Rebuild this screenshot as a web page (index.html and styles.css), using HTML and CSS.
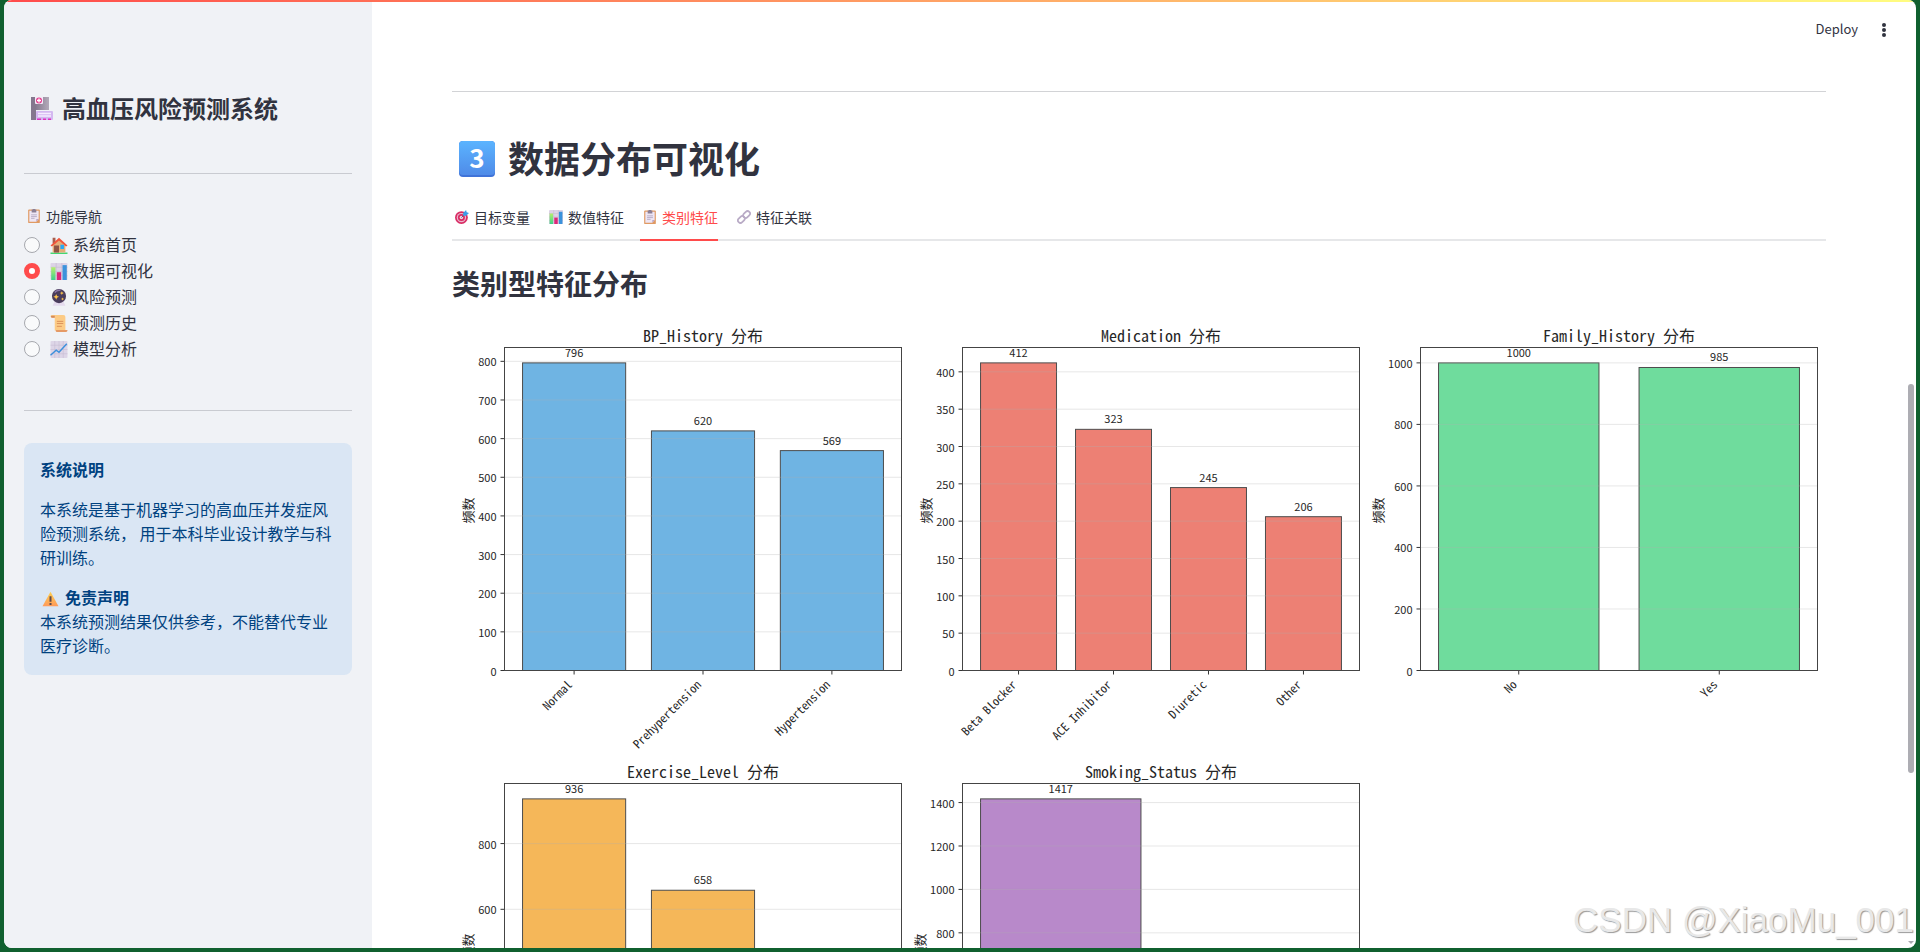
FILE: index.html
```html
<!DOCTYPE html>
<html lang="zh-CN">
<head>
  <meta charset="UTF-8">
  <title>高血压风险预测系统</title>
  <link rel="stylesheet" href="styles.css">
</head>
<body>
  <svg class="sprite" aria-hidden="true">
    <defs>
      <linearGradient id="gray" x2="1" y2="0"><stop offset="0" stop-color="#75687f"/><stop offset="1" stop-color="#b3aab9"/></linearGradient>
      <linearGradient id="sky" x2="0" y2="1"><stop offset="0" stop-color="#5bb4ff"/><stop offset="1" stop-color="#4f8be8"/></linearGradient>
      <linearGradient id="amber" x2="0" y2="1"><stop offset="0" stop-color="#ffd04f"/><stop offset="1" stop-color="#ff9a5a"/></linearGradient>
      <linearGradient id="lime" x2="0" y2="1"><stop offset="0" stop-color="#b4f06c"/><stop offset="1" stop-color="#3fd08c"/></linearGradient>
    </defs>
    <symbol id="hospital" viewBox="0 0 24 24">
      <path d="M1 1h18v13H6v10H1z" fill="url(#gray)"/>
      <path d="M1 1h5v23H1z" fill="#84778e"/>
      <path d="M5 1h8v6a1 1 0 0 1-1 1H6a1 1 0 0 1-1-1z" fill="#f3e9f8"/>
      <circle cx="9" cy="4.500" r="3" fill="#e33d8c"/>
      <path d="M9 2.500v4M7 4.500h4" stroke="#fff" stroke-width="1.300"/>
      <rect x="6" y="15" width="17" height="9" rx="1" fill="#d3b8f0"/>
      <path d="M8 17.500h13M8 20h13" stroke="#f5ecff" stroke-width="1.500"/>
      <path d="M7 23.200h4M13 23.200h3M18 23.200h3" stroke="#e02fc0" stroke-width="1.600"/>
    </symbol>
    <symbol id="clipboard" viewBox="0 0 24 24">
      <rect x="2" y="1" width="20" height="23" rx="1.500" fill="#e09a63"/>
      <path d="M4 3h16v14l-4 5H4z" fill="#eee6f4"/>
      <path d="M20 17l-4 5v-5z" fill="#b8a6c8"/>
      <path d="M8 1h2a2 2 0 0 1 4 0h2v5H8z" fill="#8b7f95"/>
      <path d="M7 10h10M7 13h10M7 16h6" stroke="#a99fba" stroke-width="1.300"/>
    </symbol>
    <symbol id="house" viewBox="0 0 24 24">
      <path d="M0 22h24v2H0z" fill="#44d672"/>
      <path d="M3 11l9-8 9 8v11H3z" fill="#e4ad78"/>
      <path d="M3 1h4v8H3z" fill="#a85d4c"/>
      <path d="M0 12L12 1l12 11-2 1.500L12 5 2 13.500z" fill="#f0543c"/>
      <path d="M5 12h7v10H5z" fill="#8e5344"/>
      <path d="M14 11h5v6h-5z" fill="#26a8f5"/>
    </symbol>
    <symbol id="bars" viewBox="0 0 24 24">
      <rect width="24" height="24" rx="1.500" fill="#dcd3e6"/>
      <path d="M0 6h24M0 12h24M0 18h24M8 0v24M16 0v24" stroke="#c3b8d0" stroke-width=".8"/>
      <path d="M1 6h6v18H1z" fill="url(#lime)"/>
      <path d="M9 13h6v11H9z" fill="#dc2879"/>
      <path d="M17 3h6v21h-6z" fill="#3b92dc"/>
    </symbol>
    <symbol id="ball" viewBox="0 0 24 24">
      <path d="M6 17h12l3 6.500H3z" fill="#e5dbee"/>
      <circle cx="12" cy="10" r="10" fill="#4a3d5c"/>
      <path d="M6 5a8 8 0 0 1 8-3" stroke="#8c77a8" stroke-width="2" fill="none"/>
      <path d="M8 7l1.200 3L12 11l-2.800 1.200L8 15l-1.200-2.800L4 11l2.800-1zM16 3l.8 2 2 .8-2 .8-.8 2-.8-2-2-.8 2-.8zM17 12l.7 1.500 1.500.7-1.500.7-.7 1.500-.7-1.500-1.500-.7 1.500-.7z" fill="#ffc54b"/>
    </symbol>
    <symbol id="scroll" viewBox="0 0 24 24">
      <path d="M2 0h16c2 0 3 1 3 3v19H6V4H3C1 4 0 3 0 1z" fill="#fccb85"/>
      <path d="M1 1h5v3H3C1 4 0 2 1 1z" fill="#d48a5b"/>
      <path d="M8 21h16c0 2-1 3-3 3H9c-2 0-2-3-1-3z" fill="#e59a66"/>
      <path d="M9 9h9M9 12h9M9 16h7" stroke="#dd935b" stroke-width="1.400"/>
    </symbol>
    <symbol id="trend" viewBox="0 0 24 24">
      <rect width="24" height="24" rx="1.500" fill="#ddd5e7"/>
      <path d="M0 6h24M0 12h24M0 18h24M6 0v24M12 0v24M18 0v24" stroke="#c6bbd3" stroke-width=".8"/>
      <path d="M0 20l8-7 4 3L23 4" stroke="#3c90dc" stroke-width="2" fill="none"/>
    </symbol>
    <symbol id="target" viewBox="0 0 24 24">
      <circle cx="11" cy="13" r="11" fill="#d92c64"/>
      <circle cx="11" cy="13" r="8" fill="#e9b9cd"/>
      <circle cx="11" cy="13" r="6" fill="#d92c64"/>
      <circle cx="11" cy="13" r="3" fill="#f0d9e6"/>
      <path d="M11 13l8-8" stroke="#5d5470" stroke-width="1.600"/>
      <path d="M14 5l5-5 1 4 4 1-5 5h-5z" fill="#3a9ce8"/>
    </symbol>
    <symbol id="link" viewBox="0 0 24 24">
      <g fill="none" stroke="#b9abc6" stroke-width="3">
        <rect x="10" y="3.500" width="13" height="8.500" rx="4.250" transform="rotate(-45 16.500 7.750)"/>
        <rect x="1" y="12" width="13" height="8.500" rx="4.250" transform="rotate(-45 7.500 16.250)"/>
      </g>
    </symbol>
    <symbol id="keycap" viewBox="0 0 36 36">
      <rect width="36" height="36" rx="4" fill="#3f73d8"/>
      <rect width="36" height="34" rx="4" fill="url(#sky)"/>
    </symbol>
    <symbol id="warning" viewBox="0 0 24 24">
      <path d="M12 1l12 22H0z" fill="url(#amber)"/>
      <path d="M10.500 8h3v8h-3zM10.500 18h3v3h-3z" fill="#5d4a4e"/>
    </symbol>
  </svg>

  <div class="app">
    <aside class="sidebar">
      <h1 class="brand"><svg class="brand-icon"><use href="#hospital"/></svg>高血压风险预测系统</h1>
      <hr>
      <fieldset class="nav">
        <legend class="nav-title"><svg class="icon-sm"><use href="#clipboard"/></svg>功能导航</legend>
        <label class="nav-item"><input type="radio" name="page"><svg class="icon"><use href="#house"/></svg><span>系统首页</span></label>
        <label class="nav-item"><input type="radio" name="page" checked><svg class="icon"><use href="#bars"/></svg><span>数据可视化</span></label>
        <label class="nav-item"><input type="radio" name="page"><svg class="icon"><use href="#ball"/></svg><span>风险预测</span></label>
        <label class="nav-item"><input type="radio" name="page"><svg class="icon"><use href="#scroll"/></svg><span>预测历史</span></label>
        <label class="nav-item"><input type="radio" name="page"><svg class="icon"><use href="#trend"/></svg><span>模型分析</span></label>
      </fieldset>
      <hr>
      <div class="info">
        <p><strong>系统说明</strong></p>
        <p>本系统是基于机器学习的高血压并发症风险预测系统， 用于本科毕业设计教学与科研训练。</p>
        <p><svg class="warn"><use href="#warning"/></svg><strong>免责声明</strong><br>本系统预测结果仅供参考，不能替代专业医疗诊断。</p>
      </div>
    </aside>

    <main class="main">
      <header class="toolbar">
        <button class="deploy">Deploy</button>
        <button class="menu" aria-label="菜单">
          <svg width="16" height="16" viewBox="0 0 16 16" fill="#31333f"><circle cx="8" cy="3" r="2"/><circle cx="8" cy="8" r="2"/><circle cx="8" cy="13" r="2"/></svg>
        </button>
      </header>
      <div class="content">
        <hr>
        <h2 class="heading">
          <svg class="keycap" viewBox="0 0 36 36"><use href="#keycap"/><text x="18" y="27" text-anchor="middle">3</text></svg>数据分布可视化
        </h2>
        <nav class="tabs">
          <button class="tab"><svg class="icon-sm"><use href="#target"/></svg>目标变量</button>
          <button class="tab"><svg class="icon-sm"><use href="#bars"/></svg>数值特征</button>
          <button class="tab active"><svg class="icon-sm"><use href="#clipboard"/></svg>类别特征</button>
          <button class="tab"><svg class="icon-sm"><use href="#link"/></svg>特征关联</button>
        </nav>
        <h3 class="subheading">类别型特征分布</h3>
        <svg id="figure" class="figure" viewBox="0 0 1374 880"></svg>
      </div>
      <div class="scroll-thumb"></div>
      <div class="scroll-arrow"></div>
    </main>
    <div class="top-line"></div>
  </div>
  <div class="watermark">CSDN @XiaoMu_001</div>

  <script>
    const charts = [
      { name: "BP_History", color: "#6fb4e3", step: 100, labels: ["Normal", "Prehypertension", "Hypertension"], values: [796, 620, 569] },
      { name: "Medication", color: "#ed8074", step: 50, labels: ["Beta Blocker", "ACE Inhibitor", "Diuretic", "Other"], values: [412, 323, 245, 206] },
      { name: "Family_History", color: "#6fdc9d", step: 200, labels: ["No", "Yes"], values: [1000, 985] },
      { name: "Exercise_Level", color: "#f5b759", step: 200, labels: ["Low", "Moderate", "High"], values: [936, 658, 391] },
      { name: "Smoking_Status", color: "#b889ca", step: 200, labels: ["Non-Smoker", "Smoker"], values: [1417, 568] }
    ];
    const plotWidth = 397;
    const plotHeight = 323;

    function drawChart(chart, index) {
      const left = 52.5 + (index % 3) * 458;
      const top = 25.5 + Math.floor(index / 3) * 436;
      const bottom = top + plotHeight;
      const max = Math.max(...chart.values) * 1.05;
      // bars are 0.8 wide with a 5% margin on both sides
      const unit = plotWidth / ((chart.values.length - 0.2) * 1.1);
      const margin = plotWidth / 22;
      const y = v => bottom - v / max * plotHeight;
      let bars = "", grid = "", text = "";

      chart.values.forEach((value, i) => {
        const x = left + margin + i * unit;
        const mid = x + unit * 0.4;
        bars += `<rect class="bar" x="${x}" y="${y(value)}" width="${unit * 0.8}" height="${bottom - y(value)}" fill="${chart.color}"/>`;
        bars += `<path class="axis" d="M${mid} ${bottom}v4"/>`;
        text += `<text class="number" x="${mid}" y="${y(value) - 6}" text-anchor="middle">${value}</text>`;
        text += `<text transform="translate(${mid - 1} ${bottom + 15}) rotate(-45)" text-anchor="end">${chart.labels[i]}</text>`;
      });

      for (let v = 0; v <= max; v += chart.step) {
        grid += `<path class="grid" d="M${left} ${y(v)}h${plotWidth}"/><path class="axis" d="M${left} ${y(v)}h-4"/>`;
        text += `<text class="number" x="${left - 8}" y="${y(v) + 5}" text-anchor="end">${v}</text>`;
      }

      const labelX = left - (max > 1000 ? 38 : 32);
      text += `<text class="y-label" transform="translate(${labelX} ${top + 163}) rotate(-90)" text-anchor="middle">频数</text>`;
      text += `<text class="chart-title" x="${left + plotWidth / 2}" y="${top - 6}" text-anchor="middle">${chart.name} 分布</text>`;
      return `<g>${bars}${grid}<rect class="frame" x="${left}" y="${top}" width="${plotWidth}" height="${plotHeight}"/>${text}</g>`;
    }

    document.getElementById("figure").innerHTML = charts.map(drawChart).join("");
  </script>
</body>
</html>
```
FILE: styles.css
```css
* {
  box-sizing: border-box;
}

body {
  margin: 0;
  height: 100vh;
  padding: 0 4px 4px;
  overflow: hidden;
  background: #10602f;
  color: #31333f;
  font-family: "Noto Sans CJK SC", sans-serif;
  font-size: 16px;
  line-height: 24px;
}

h1, h2, h3, p {
  margin: 0;
}

button {
  border: 0;
  padding: 0;
  background: none;
  color: inherit;
  font: inherit;
}

hr {
  width: 100%;
  margin: 0;
  border: 0;
  border-top: 1px solid #d2d3d6;
}

.sprite {
  position: absolute;
  width: 0;
  height: 0;
}

.app {
  position: relative;
  display: flex;
  height: 100%;
  border-radius: 8px;
  overflow: hidden;
  background: #fff;
}

.top-line {
  position: absolute;
  top: 0;
  left: 0;
  right: 0;
  height: 2px;
  background: linear-gradient(to right, #ff4b4b, #fffd80);
}

.sidebar {
  flex: 0 0 368px;
  padding: 92px 20px 0;
  background: #f0f2f6;
}

.sidebar hr {
  border-color: #c9cbd1;
}

.brand {
  display: flex;
  align-items: center;
  gap: 8px;
  margin-bottom: 49px;
  padding-left: 6px;
  font-size: 24px;
  line-height: 32px;
}

.brand-icon {
  width: 24px;
  height: 24px;
}

.nav {
  margin: 32px 0 48px;
  padding: 0;
  border: 0;
}

.nav-title {
  display: flex;
  align-items: center;
  gap: 5px;
  margin-bottom: 6px;
  padding: 0 0 0 3px;
  font-size: 14px;
  line-height: 20px;
}

.icon-sm {
  width: 14px;
  height: 14px;
}

.icon {
  width: 18px;
  height: 17px;
  margin: 0 5px 0 10px;
}

.nav-item {
  display: flex;
  align-items: center;
  height: 26px;
}

.nav-item span {
  padding-bottom: 2px;
}

.nav-item input {
  appearance: none;
  width: 16px;
  height: 16px;
  margin: 0;
  border: 1px solid #a6a8ae;
  border-radius: 50%;
  background: #f9fafb;
}

.nav-item input:checked {
  border: 5px solid #ff4b4b;
  background: #fff;
}

.info {
  display: flex;
  flex-direction: column;
  gap: 16px;
  margin-top: 32px;
  padding: 14px 16px 18px;
  border-radius: 8px;
  background: #dae6f4;
  color: #004280;
}

.warn {
  width: 17px;
  height: 16px;
  margin: 0 6px 0 2px;
  vertical-align: -3px;
}

.main {
  position: relative;
  flex: 1;
  min-width: 0;
  overflow: hidden;
}

.toolbar {
  display: flex;
  justify-content: flex-end;
  align-items: center;
  gap: 18px;
  height: 60px;
  padding-right: 24px;
}

.deploy {
  padding-bottom: 2px;
  font-size: 13px;
  line-height: 20px;
}

.menu {
  display: flex;
}

.content {
  padding: 31px 90px 0 80px;
}

.heading {
  display: flex;
  align-items: center;
  gap: 13px;
  margin: 43px 0 20px;
  padding-left: 7px;
  font-size: 36px;
  line-height: 44px;
}

.keycap {
  width: 36px;
  height: 36px;
  margin-top: 4px;
  overflow: visible;
}

.keycap text {
  fill: #fff;
  font: bold 26px "Noto Sans CJK SC", sans-serif;
}

.tabs {
  display: flex;
  gap: 16px;
  border-bottom: 2px solid #e6e7e9;
}

.tab {
  display: flex;
  align-items: center;
  gap: 5px;
  margin-bottom: -2px;
  padding: 8px 0 12px 3px;
  border-bottom: 2px solid transparent;
  font-size: 14px;
  line-height: 20px;
}

.tab.active {
  border-color: #ff4b4b;
  color: #ff4b4b;
}

.subheading {
  margin: 25px 0 22px;
  font-size: 28px;
  line-height: 34px;
}

.figure {
  display: block;
  width: 100%;
}

.figure text {
  fill: #262626;
  font-size: 12px;
  font-feature-settings: "hwid";
}

.figure .number {
  font-size: 11px;
  font-feature-settings: normal;
}

.figure .y-label {
  font-size: 13px;
}

.figure .chart-title {
  font-size: 16px;
}

.bar {
  stroke: #4d4d4d;
}

.grid {
  stroke: #b0b0b0;
  stroke-opacity: 0.3;
}

.axis {
  stroke: #333;
}

.frame {
  fill: none;
  stroke: #444;
}

.scroll-thumb {
  position: absolute;
  top: 384px;
  right: 2px;
  width: 6px;
  height: 41%;
  border-radius: 3px;
  background: #adadb3;
}

.scroll-arrow {
  position: absolute;
  right: 2px;
  bottom: 4px;
  border: 3px solid transparent;
  border-top-color: #a9a9af;
  border-bottom: 0;
}

.watermark {
  position: absolute;
  right: 6px;
  bottom: 10px;
  color: #e8e8e8;
  font: 35px/44px "Liberation Sans", sans-serif;
  text-shadow: 1px 1px 1px #999;
}
```
